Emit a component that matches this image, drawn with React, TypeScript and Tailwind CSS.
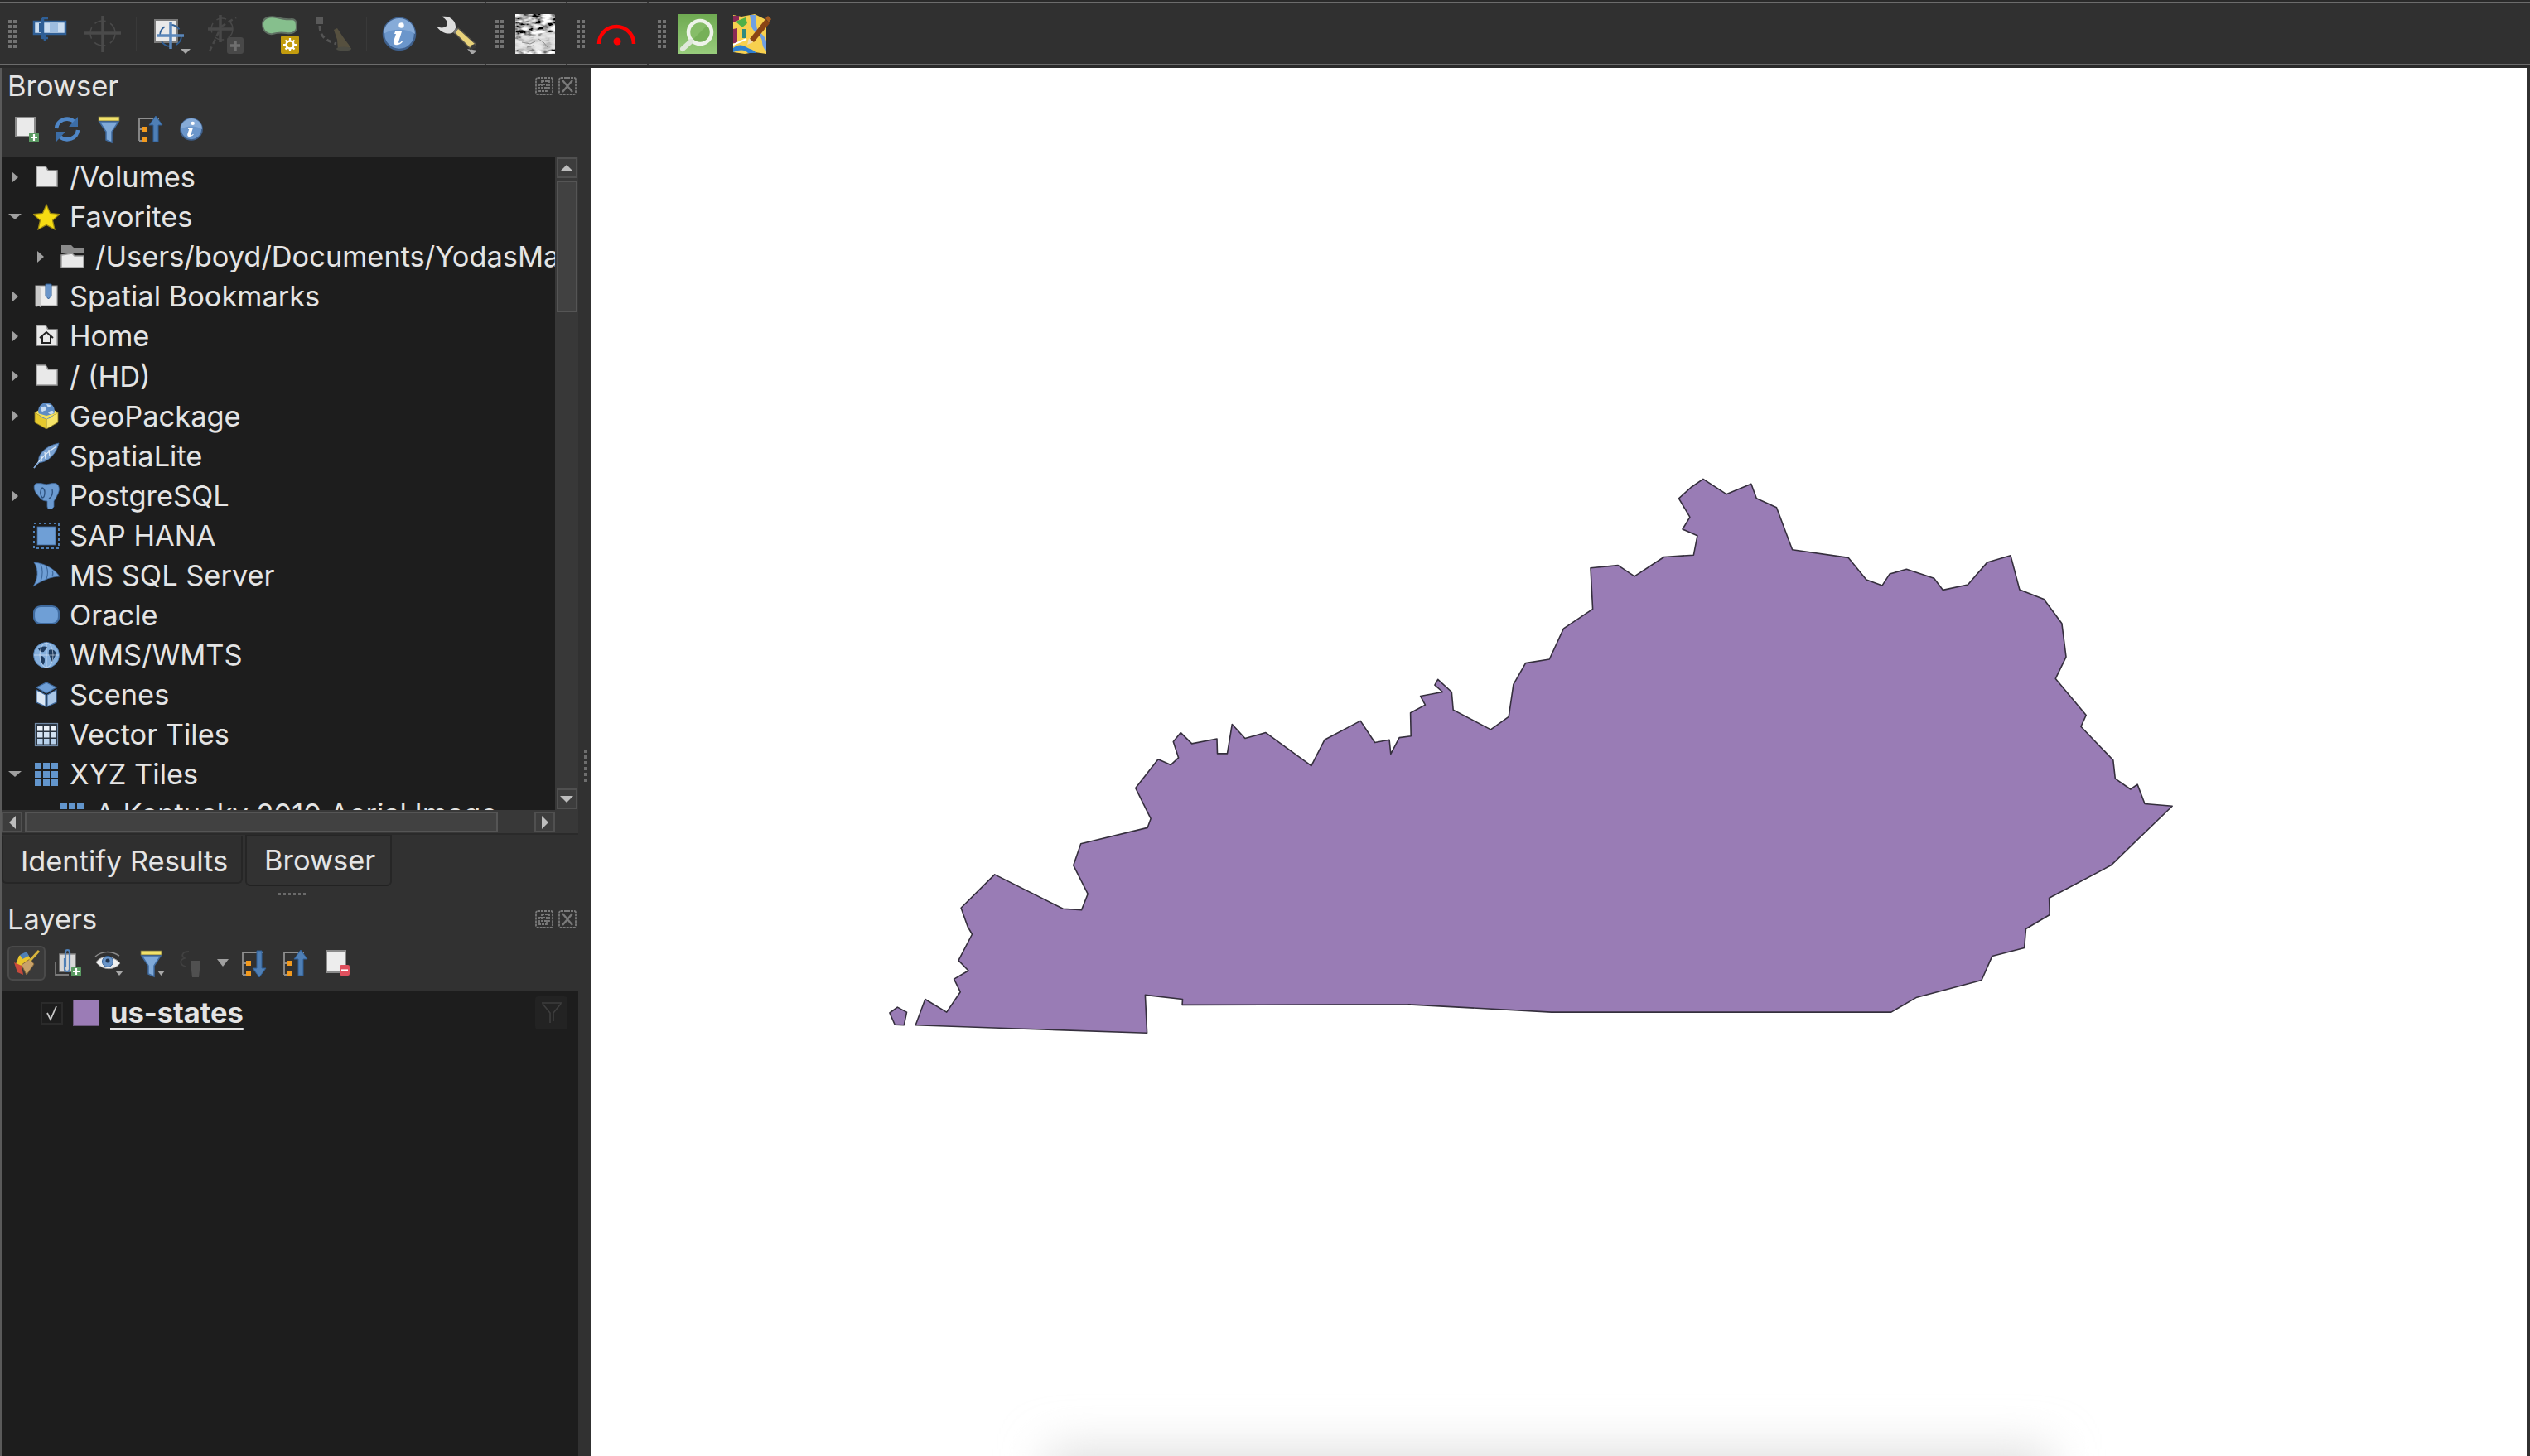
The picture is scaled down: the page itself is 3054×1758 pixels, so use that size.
import React from "react";

const Svg = ({ s = 36, w, h, className = "", children }: { s?: number; w?: number; h?: number; className?: string; children?: React.ReactNode }) => (
  <svg width={w ?? s} height={h ?? s} viewBox={`0 0 ${w ?? s} ${h ?? s}`} className={`shrink-0 ${className}`}>
    {children}
  </svg>
);

/* ---------- main-toolbar icons (48 grid) ---------- */
const Grip = ({ className = "" }: { className?: string }) => (
  <Svg w={10} h={34} className={className}>
    {[0, 6, 12, 18, 24, 30].map((y) => (
      <g key={y} fill="#737373">
        <rect x={0} y={y} width={4} height={4} />
        <rect x={6} y={y} width={4} height={4} />
      </g>
    ))}
  </Svg>
);
const ToolSep = ({ className = "" }: { className?: string }) => <div className={`w-px h-[40px] bg-[#393939] shrink-0 ${className}`} />;

const IcOverview = ({ className = "" }: { className?: string }) => (
  <Svg s={48} className={className}>
    <rect x={5} y={9} width={38} height={15} fill="#c9dcf0" stroke="#2f5f96" strokeWidth={2.5} />
    <rect x={11} y={11} width={2} height={11} fill="#2f5f96" />
    <rect x={24} y={11} width={10} height={11} fill="#9dbde0" />
    <path d="M22 5h-6v24h6M18 24v8" fill="none" stroke="#2f5f96" strokeWidth={2.5} />
    <rect x={14} y={5} width={3} height={25} fill="#2f5f96" />
  </Svg>
);
const IcCrossDisabled = ({ className = "" }: { className?: string }) => (
  <Svg s={48} className={className}>
    <g stroke="#4a4a4a" fill="none">
      <circle cx={24} cy={23} r={15} strokeWidth={1.5} strokeDasharray="14 6" />
      <path d="M24 2v44M2 23h44" strokeWidth={3.5} />
    </g>
  </Svg>
);
const IcSelect = ({ className = "" }: { className?: string }) => (
  <Svg s={48} className={className}>
    <rect x={5} y={7} width={27} height={27} fill="#e9e9e9" stroke="#7b7b7b" strokeWidth={2} />
    <circle cx={24} cy={26} r={13} fill="none" stroke="#2f5f96" strokeWidth={1.8} strokeDasharray="13 7" />
    <path d="M24 10v32M8 26h32" stroke="#5b87ba" strokeWidth={3.5} />
    <path d="M38 43h12l-6 6z" fill="#a8a8a8" transform="translate(-2 -1)" />
  </Svg>
);
const IcAddCross = ({ className = "" }: { className?: string }) => (
  <Svg s={48} className={className}>
    <g stroke="#484848" fill="none">
      <circle cx={20} cy={18} r={13} strokeWidth={1.5} strokeDasharray="12 6" />
      <path d="M18 1v33M3 18h30" strokeWidth={3.5} />
      <path d="M5 45l14-30M19 15l18-11" strokeWidth={2.5} strokeDasharray="6 4" />
    </g>
    <rect x={26} y={28} width={20} height={20} rx={3} fill="#484848" />
    <path d="M36 32v12M30 38h12" stroke="#6f6f6f" strokeWidth={3.5} />
  </Svg>
);
const IcBlob = ({ className = "" }: { className?: string }) => (
  <Svg s={48} className={className}>
    <path d="M3 12C3 4 12 2 20 4c8 2 12 3 18 2 6 0 6 6 6 10 0 6-6 8-12 7-7-1-10-1-17 1C8 25 3 20 3 12z" fill="#86bf8d" stroke="#5f6f62" strokeWidth={2} />
    <rect x={25} y={26} width={22} height={22} rx={2} fill="#c39c0e" />
    <circle cx={36} cy={37} r={4.5} fill="none" stroke="#fff" strokeWidth={2.5} />
    <path d="M36 29v4M36 41v4M28 37h4M40 37h4M30.5 31.5l3 3M38.5 39.5l3 3M41.5 31.5l-3 3M33.5 39.5l-3 3" stroke="#fff" strokeWidth={2.2} />
  </Svg>
);
const IcBrushPath = ({ className = "" }: { className?: string }) => (
  <Svg s={48} className={className}>
    <rect x={3} y={4} width={8} height={8} fill="#5a5a5a" />
    <path d="M7 14c0 14 8 18 20 22" fill="none" stroke="#555" strokeWidth={3} strokeDasharray="6 4" />
    <path d="M24 19l4-2 8 12 6 8 3 5-16 1-1-12z" fill="#56503f" />
    <ellipse cx={36} cy={42} rx={9} ry={2.5} fill="#4c4c44" />
  </Svg>
);
const Info = ({ s = 48, r = 19 }: { s?: number; r?: number }) => {
  const k = r / 19;
  return (
    <Svg s={s}>
      <g transform={`translate(${s / 2} ${s / 2}) scale(${k})`}>
        <circle r={19} fill="#6b96cb" stroke="#3f608c" strokeWidth={2.5} />
        <path d="M-19 0a19 19 0 0 1 38 0c-10-7-28-7-38 0z" fill="#86abd8" />
        <circle cx={2.5} cy={-10.5} r={3.2} fill="#fff" />
        <path d="M-5-3H3L-1 10c0 1.5 2 1 4-1.5l1 1C1 14-8 15-7 9l3-9h-2z" fill="#fff" />
      </g>
    </Svg>
  );
};
const IcWrench = ({ className = "" }: { className?: string }) => (
  <Svg s={48} className={className}>
    <path d="M21 22l5-5 21 19-5 7z" fill="#e8d27a" stroke="#55524a" strokeWidth={1.5} />
    <path d="M6 3C16 1 24 8 23 17l-3 5C14 26 5 22 0 15c7 3 13 1 13-4 0-3-3-6-7-8z" fill="#dcdcdc" />
    <path d="M20 22l3-5 3 1-4 6z" fill="#777" />
    <path d="M37 42l12 2-6 5z" fill="#a8a8a8" />
    <path d="M41 38l5-2 1 5-7 2z" fill="#3a3a3a" />
  </Svg>
);
const IcHillshade = ({ className = "" }: { className?: string }) => (
  <Svg s={48} className={className}>
    <defs>
      <filter id="hs1" x="0" y="0" width="100%" height="100%">
        <feTurbulence type="fractalNoise" baseFrequency="0.09 0.2" numOctaves={3} seed={4} />
        <feColorMatrix values="2.6 0 0 0 -0.8 2.6 0 0 0 -0.8 2.6 0 0 0 -0.8 0 0 0 0 1" />
      </filter>
    </defs>
    <rect width={48} height={48} filter="url(#hs1)" />
    <path d="M0 30l12-3 10 2 14-6 12-2v21l-14 2-10-2-14 3-10-2z" fill="#e4e4e4" opacity={0.82} />
    <path d="M8 34l10 2 6-3M28 30l6 4 5 6M14 40l8-2" fill="none" stroke="#8a8a8a" strokeWidth={1} />
  </Svg>
);
const IcArc = ({ className = "" }: { className?: string }) => (
  <Svg s={48} className={className}>
    <path d="M3 36a21 21 0 0 1 42 0" fill="none" stroke="#fe0000" strokeWidth={4.5} />
    <circle cx={25} cy={33} r={4.5} fill="#fe0000" />
  </Svg>
);
const IcMagnify = ({ className = "" }: { className?: string }) => (
  <Svg s={48} className={className}>
    <defs>
      <linearGradient id="mg" x1="0" y1="0" x2="0" y2="1">
        <stop offset="0" stopColor="#6faa52" />
        <stop offset="1" stopColor="#98cc7c" />
      </linearGradient>
    </defs>
    <rect width={48} height={48} fill="url(#mg)" />
    <circle cx={27} cy={22} r={14} fill="#76b058" />
    <path d="M17 32a14 14 0 0 1 20-20z" fill="#86bd68" />
    <circle cx={27} cy={22} r={14} fill="none" stroke="#eef3ea" strokeWidth={4.5} />
    <path d="M16 33L6 42" stroke="#dfe8da" strokeWidth={6} strokeLinecap="round" />
  </Svg>
);
const IcMap = ({ className = "" }: { className?: string }) => (
  <Svg s={48} className={className}>
    <path d="M0 1l10 2 16-3 8 4 6 3v41l-14-2-12 2-14-2z" fill="#f7d04f" />
    <path d="M0 2h7v5l-7 3zM0 18l5-1v19l-5-1z" fill="#8a2a55" />
    <path d="M3 9l12-5 2 7-6 5z" fill="#4fb048" />
    <path d="M20 1c2 8 0 13 5 19 3 4 9 6 10 13 0 5 2 9 5 11V33c-2-8-8-10-11-15-2-6 0-11-2-17z" fill="#6f9fe3" />
    <path d="M0 41c5-4 10-5 16-1 5 3 8 2 12 7H18c-4-4-9-5-18-1z" fill="#2f7fd0" />
    <rect x={11} y={18} width={5} height={11} fill="#2e8a80" />
    <path d="M0 37l16-7" stroke="#fff" strokeWidth={2} />
    <path d="M20 30L39 6l5 5-19 23z" fill="#8a4414" />
    <path d="M39 5l3-3 4 4-3 4z" fill="#a55a20" />
    <path d="M19 29l5 5-7 3z" fill="#eed9b2" />
  </Svg>
);

/* ---------- small toolbar icons (36 grid) ---------- */
const IcNewPlus = () => (
  <Svg>
    <rect x={6} y={4} width={23} height={23} fill="#eaeaea" stroke="#8a8a8a" strokeWidth={2} />
    <rect x={22} y={22} width={12} height={12} rx={1.5} fill="#5a9a62" />
    <path d="M28 24v8M24 28h8" stroke="#fff" strokeWidth={2.2} />
  </Svg>
);
const IcRefresh = () => (
  <Svg>
    <g fill="none" stroke="#4f86c6" strokeWidth={4.5}>
      <path d="M5 17C6 7 18 2 27 9" />
      <path d="M31 19C30 29 18 34 9 27" />
    </g>
    <path d="M31 3v12H20z" fill="#3c6da6" />
    <path d="M5 33V21h11z" fill="#3c6da6" />
  </Svg>
);
const IcFilter = ({ drop = false }: { drop?: boolean }) => (
  <Svg>
    <rect x={6} y={3} width={25} height={5} fill="#f2e26a" stroke="#6f6a3a" strokeWidth={0.8} />
    <path d="M7 9h23L22 21v13l-7-3V21z" fill="#7fa9d8" stroke="#3f6a9e" strokeWidth={1.5} />
    {drop && <path d="M26 27h9l-4.500 6z" fill="#a8a8a8" />}
  </Svg>
);
const IcTree = ({ down = false }: { down?: boolean }) => (
  <Svg>
    <path d="M5 5h24M5 5v27M5 18h6M5 32h6" stroke="#8f8f8f" strokeWidth={1.8} fill="none" />
    <rect x={9} y={15} width={6} height={6} fill="#f29a1e" />
    <rect x={9} y={28} width={6} height={6} fill="#f29a1e" />
    {down ? (
      <path d="M22 3h6v21h5L25 35 17 24h5z" fill="#4f7fb5" stroke="#2f5f96" strokeWidth={1} />
    ) : (
      <path d="M22 33h6V13h5L25 2 17 13h5z" fill="#4f7fb5" stroke="#2f5f96" strokeWidth={1} />
    )}
  </Svg>
);
const IcPaint = () => (
  <Svg>
    <path d="M9 9l9-4 5 8-11 9-7-3z" fill="#e9c52d" />
    <path d="M3 17l9 4 2 11-7-3z" fill="#c84a3c" />
    <path d="M10 8l8-4 3 5-8 4z" fill="#4f7fb5" />
    <path d="M12 20l10-7 5 6-9 13z" fill="#c9a26a" stroke="#8a6a3a" strokeWidth={1} />
    <path d="M22 15L33 3" stroke="#d8b43c" strokeWidth={3} />
  </Svg>
);
const IcClip = () => (
  <Svg>
    <path d="M3 17v15h16" fill="none" stroke="#7b7b7b" strokeWidth={1.8} />
    <rect x={8} y={7} width={19} height={21} fill="#d8d8d8" stroke="#8a8a8a" strokeWidth={1.5} />
    <path d="M14 12v13c0 4 6 4 6 0V5c0-4-5-4-5 0v17" fill="none" stroke="#4f7fb5" strokeWidth={2.2} />
    <rect x={22} y={22} width={12} height={12} rx={1.5} fill="#5a9a62" />
    <path d="M28 24v8M24 28h8" stroke="#fff" strokeWidth={2.2} />
  </Svg>
);
const IcEye = () => (
  <Svg>
    <path d="M2 17C8 8 22 8 31 18 24 27 10 27 2 17z" fill="#f0f0f0" stroke="#9a9a9a" strokeWidth={1} />
    <path d="M1 10C9 3 20 3 30 9" fill="none" stroke="#8a8a8a" strokeWidth={1.5} />
    <circle cx={16} cy={16} r={6.5} fill="#6a95c9" stroke="#2f5f96" strokeWidth={1} />
    <circle cx={16} cy={15} r={2.500} fill="#20344e" />
    <path d="M25 27h10l-5 6z" fill="#a8a8a8" />
  </Svg>
);
const IcLegendOff = () => (
  <Svg>
    <path d="M14 4C6 4 4 9 9 12c-7 2-6 8 1 10" fill="none" stroke="#414141" strokeWidth={1.8} />
    <path d="M16 15h12v3l-2 17h-8l-2-17z" fill="#505050" />
  </Svg>
);
const IcRemove = () => (
  <Svg>
    <rect x={7} y={3} width={23} height={26} fill="#ededed" stroke="#8a8a8a" strokeWidth={2} />
    <rect x={23} y={20} width={12} height={13} rx={2} fill="#e0505e" />
    <path d="M25 26.500h8" stroke="#fff" strokeWidth={2.2} />
  </Svg>
);
const Float = () => (
  <Svg w={22} h={22}>
    <g fill="none" stroke="#7a7a7a" strokeWidth={1.8} strokeDasharray="3 1">
      <rect x={1} y={1} width={20} height={20} rx={2} />
      <rect x={8} y={5} width={9} height={8} />
      <rect x={5} y={9} width={9} height={8} />
    </g>
  </Svg>
);
const Close = () => (
  <Svg w={22} h={22}>
    <g fill="none" stroke="#7a7a7a" strokeWidth={1.8}>
      <rect x={1} y={1} width={20} height={20} rx={2} strokeDasharray="3 1" />
      <path d="M5 4l12 14M17 4L5 18" strokeWidth={2.4} />
    </g>
  </Svg>
);

/* ---------- tree icons (32 grid) ---------- */
const Folder = () => (
  <Svg s={32}>
    <path d="M4 3h11l3 5h11v19H4z" fill="#e9e9e9" stroke="#9a9a9a" strokeWidth={1.5} />
  </Svg>
);
const FolderOpen = () => (
  <Svg s={32}>
    <path d="M3 2h12l4 4h11v6H3z" fill="#8a8a8a" />
    <path d="M3 14l13-2 3 3h11v14H3z" fill="#e9e9e9" stroke="#9a9a9a" strokeWidth={1.5} />
  </Svg>
);
const Star = () => (
  <Svg s={32}>
    <path d="M16 1l4.500 10.500L32 12.500l-8.500 7.500 2.500 11L16 25.500 6 31l2.500-11L0 12.500l11.500-1z" fill="#f6dc12" stroke="#9d8a12" strokeWidth={1.2} />
  </Svg>
);
const Book = () => (
  <Svg s={32}>
    <path d="M3 3h26v24H8c-3 0-5 2-5 0z" fill="#ececec" stroke="#9a9a9a" strokeWidth={1.2} />
    <path d="M3 3c4 0 6 2 6 4v22c-3-2-6-2-6-2z" fill="#c9c9c9" />
    <path d="M15 1h7v14l-3.500 4-3.500-4z" fill="#6a95c9" stroke="#2f5f96" strokeWidth={1} />
  </Svg>
);
const Home = () => (
  <Svg s={32}>
    <path d="M4 3h11l3 5h11v19H4z" fill="#e9e9e9" stroke="#9a9a9a" strokeWidth={1.5} />
    <path d="M8 18l8-7 8 7M11 16v8h10v-8" fill="none" stroke="#202020" strokeWidth={2} />
  </Svg>
);
const Geo = () => (
  <Svg s={32}>
    <path d="M2 12l14-8 14 8-14 8z" fill="#f4e15c" />
    <path d="M2 12v12l14 8V20z" fill="#e6c92d" stroke="#8a7a20" strokeWidth={0.8} />
    <path d="M30 12v12l-14 8V20z" fill="#f6e468" stroke="#8a7a20" strokeWidth={0.8} />
    <circle cx={16} cy={10} r={10} fill="#5e8cc4" />
    <path d="M9 7c3-3 8-3 7 1-1 3-4 1-5 4zM18 12c3-2 6-3 7 0-2 3-5 3-7 0zM16 2c2 0 5 1 6 2l-4 2z" fill="#c9dcf0" />
    <path d="M2 12l14 8 14-8-14 4z" fill="#f4e15c" />
  </Svg>
);
const Feather = () => (
  <Svg s={32}>
    <path d="M31 1C18 4 10 10 7 18l-1 7 5-1c8-2 17-10 20-23z" fill="#7ba3d3" stroke="#3f6a9e" strokeWidth={0.8} />
    <path d="M28 5C18 11 10 18 1 31M14 12l1 8M19 9l1 8M10 16l0 7" stroke="#dfeaf6" strokeWidth={1.3} fill="none" />
    <path d="M7 24L1 31" stroke="#7ba3d3" strokeWidth={1.5} />
  </Svg>
);
const Pg = () => (
  <Svg s={32}>
    <path d="M3 1c4-1 9 0 13 1 4-1 9-2 12-1 4 2 4 8 2 12l-3 6-2 3v7l-3 3c-3 1-5-1-5-4v-6c-4 0-6-1-8-3L4 13C1 9 0 3 3 1z" fill="#6c9bd1" stroke="#3f6a9e" strokeWidth={0.8} />
    <path d="M11 6c-3 3-3 8 0 12 2 0 3-3 3-7 0-3-1-4-3-5zM23 8c1 4 0 9-4 11" fill="none" stroke="#2f5380" strokeWidth={1.4} />
  </Svg>
);
const Hana = () => (
  <Svg s={32}>
    <rect x={1} y={1} width={30} height={30} fill="none" stroke="#4f7fb5" strokeWidth={2} strokeDasharray="3 3" />
    <rect x={5} y={5} width={22} height={22} fill="#6f9fd6" stroke="#3f6a9e" strokeWidth={0.8} />
  </Svg>
);
const Sail = () => (
  <Svg s={32}>
    <path d="M1 0c12 1 24 7 31 17C22 17 10 22 0 29c6-9 7-20 1-29z" fill="#6f9fd6" stroke="#3f6a9e" strokeWidth={0.8} />
    <path d="M9 2c3 7 3 13 0 21M16 5c2 5 2 10 0 15M23 10c1 2 1 5 0 7" stroke="#3f6a9e" strokeWidth={1.2} fill="none" />
  </Svg>
);
const Oracle = () => (
  <Svg s={32}>
    <rect x={1} y={5} width={30} height={21} rx={8} fill="#6f9fd6" stroke="#3f6a9e" strokeWidth={2.2} />
  </Svg>
);
const Globe = () => (
  <Svg s={32}>
    <circle cx={16} cy={16} r={15.500} fill="#86b0dd" stroke="#4f7fb5" strokeWidth={0.8} />
    <path d="M6 8c4-3 8-3 11-2 0 3-3 3-4 6-3 1-5 0-7-4zM19 10c4-2 8 0 9 5-2 3-3 5-5 9-2-1-2-5-3-7-2-1-1-5-1-7zM9 17c3 0 5 2 5 5 0 3-1 5-2 6-2-3-4-7-3-11z" fill="#1f3c60" />
    <path d="M1 16h30M16 1v30" stroke="#dfeaf6" strokeWidth={0.6} />
    <ellipse cx={16} cy={16} rx={8} ry={15} fill="none" stroke="#dfeaf6" strokeWidth={0.6} />
  </Svg>
);
const Cube = () => (
  <Svg s={32}>
    <path d="M16 1l12 6-12 7L4 7z" fill="#6f9fd6" stroke="#3f6a9e" strokeWidth={1.2} />
    <path d="M4 10l11 6v14L4 25z" fill="#dbe7f4" stroke="#3f6a9e" strokeWidth={1.2} />
    <path d="M28 10l-11 6v14l11-5z" fill="#a9c6e6" stroke="#3f6a9e" strokeWidth={1.2} />
  </Svg>
);
const VGrid = () => (
  <Svg s={32}>
    <rect x={2.500} y={2.500} width={27} height={27} fill="#2a3440" stroke="#6f87a3" strokeWidth={1.2} />
    {[5, 13, 21].map((y) =>
      [5, 13, 21].map((x) => <rect key={`${x}-${y}`} x={x} y={y} width={6.500} height={6.500} fill={y === 21 ? "#b7d0ea" : y === 13 ? "#d3e2f2" : "#edf3fa"} />),
    )}
  </Svg>
);
const XGrid = () => (
  <Svg s={32}>
    {[2, 12, 22].map((y) =>
      [2, 12, 22].map((x) => <rect key={`${x}-${y}`} x={x} y={y} width={8} height={8} fill="#6295cc" />),
    )}
  </Svg>
);

/* ---------- tree ---------- */
const Right = () => (
  <svg width={16} height={14} viewBox="0 0 16 14" className="shrink-0">
    <path d="M4 0l8 7-8 7z" fill="#9f9f9f" />
  </svg>
);
const Down = () => (
  <svg width={16} height={14} viewBox="0 0 16 14" className="shrink-0">
    <path d="M0 3h16L8 10z" fill="#9f9f9f" />
  </svg>
);

type Row = { label: string; icon: React.ReactNode; arrow?: "r" | "d"; indent?: boolean };
const rows: Row[] = [
  { label: "/Volumes", icon: <Folder />, arrow: "r" },
  { label: "Favorites", icon: <Star />, arrow: "d" },
  { label: "/Users/boyd/Documents/YodasMaps/", icon: <FolderOpen />, arrow: "r", indent: true },
  { label: "Spatial Bookmarks", icon: <Book />, arrow: "r" },
  { label: "Home", icon: <Home />, arrow: "r" },
  { label: "/ (HD)", icon: <Folder />, arrow: "r" },
  { label: "GeoPackage", icon: <Geo />, arrow: "r" },
  { label: "SpatiaLite", icon: <Feather /> },
  { label: "PostgreSQL", icon: <Pg />, arrow: "r" },
  { label: "SAP HANA", icon: <Hana /> },
  { label: "MS SQL Server", icon: <Sail /> },
  { label: "Oracle", icon: <Oracle /> },
  { label: "WMS/WMTS", icon: <Globe /> },
  { label: "Scenes", icon: <Cube /> },
  { label: "Vector Tiles", icon: <VGrid /> },
  { label: "XYZ Tiles", icon: <XGrid />, arrow: "d" },
  { label: "A Kentucky 2010 Aerial Image", icon: <XGrid />, indent: true },
];

const TreeRow = ({ r }: { r: Row }) => (
  <div className={`flex items-center h-[48.07px] shrink-0 ${r.indent ? "pl-[39px]" : "pl-[8px]"}`}>
    <div className="w-[16px] shrink-0">{r.arrow === "r" ? <Right /> : r.arrow === "d" ? <Down /> : null}</div>
    <div className="ml-[14px] w-[32px] shrink-0">{r.icon}</div>
    <span className="ml-[12px] whitespace-nowrap">{r.label}</span>
  </div>
);

/* ---------- scrollbars ---------- */
const ScrollBtn = ({ dir }: { dir: "u" | "d" | "l" | "r" }) => (
  <div className="w-[25px] h-[25px] shrink-0 flex items-center justify-center bg-[#3d3d3d] border-2 border-[#505050]">
    <svg width={16} height={16} viewBox="0 0 16 16">
      <path
        d={dir === "u" ? "M0 12L8 4l8 8z" : dir === "d" ? "M0 4h16l-8 8z" : dir === "l" ? "M12 0v16L4 8z" : "M4 0v16l8-8z"}
        fill="#bdbdbd"
      />
    </svg>
  </div>
);

/* ---------- map ---------- */
const z7 = (x: number, y: number) => `${(1040 + x / 2.24).toFixed(1)},${(560 + y / 2.178).toFixed(1)}`;
const z8 = (x: number, y: number) => `${(1700 + x / 1.568).toFixed(1)},${(560 + y / 2.178).toFixed(1)}`;

const west = [
  [146, 1476], [172, 1408], [230, 1442], [267, 1389], [250, 1355], [289, 1333], [262, 1306], [299, 1237], [287, 1217], [269, 1168],
  [360, 1080], [545, 1170], [595, 1173], [612, 1131], [573, 1056], [593, 999], [773, 957], [782, 933], [741, 853], [802, 777],
  [836, 792], [857, 773], [843, 731], [863, 707], [893, 736], [961, 723], [962, 762], [989, 762], [1002, 685], [1037, 722],
  [1093, 707], [1216, 794], [1252, 726], [1349, 676], [1388, 733], [1427, 726], [1431, 763], [1454, 720],
];
const east = [
  [5, 716], [4, 655], [32, 634], [23, 611], [65, 600], [50, 582], [56, 567], [82, 600], [85, 647], [156, 699], [190, 665], [199, 580],
  [222, 524], [267, 514], [294, 433], [349, 382], [345, 274], [397, 267], [428, 296], [484, 245], [540, 240], [547, 189], [519, 172],
  [533, 140], [512, 91], [535, 62], [558, 40], [602, 80], [649, 53], [659, 91], [697, 115], [727, 226], [833, 247], [867, 305],
  [897, 320], [911, 290], [943, 277], [995, 301], [1012, 332], [1059, 318], [1096, 259], [1140, 241], [1157, 331], [1203, 356],
  [1237, 420], [1245, 508], [1225, 565], [1283, 661], [1273, 691], [1334, 779], [1338, 828], [1367, 856], [1380, 843], [1394, 894],
  [1446, 900], [1330, 1056], [1213, 1142], [1214, 1186], [1169, 1223], [1166, 1273], [1105, 1295], [1085, 1358], [961, 1404],
  [914, 1442], [271, 1442], [0, 1422],
];
const south = [[1484, 1422], [867, 1423], [868, 1408], [767, 1397], [772, 1497]];
const pentagon = [[76, 1444], [97, 1429], [122, 1442], [115, 1476], [90, 1475]];

const state = [
  ...west.map(([x, y]) => z7(x, y)),
  ...east.map(([x, y]) => z8(x, y)),
  ...south.map(([x, y]) => z7(x, y)),
].join(" ");
const island = pentagon.map(([x, y]) => z7(x, y)).join(" ");

const ToolLine = () => (
  <div className="flex h-[2px] shrink-0 bg-[#6c6c6c]">
    <div className="w-[587px] border-r-2 border-[#3a3a3a]" />
    <div className="w-[98px] border-r-2 border-[#3a3a3a]" />
    <div className="w-[98px] border-r-2 border-[#3a3a3a]" />
  </div>
);

export default function App() {
  return (
    <div className="w-[3054px] h-[1758px] overflow-hidden flex flex-col bg-[#313131] text-[#e4e4e4] text-[34.4px] font-[Inter,sans-serif]">
      {/* Main toolbar */}
      <div className="h-[82px] shrink-0 flex flex-col bg-[#303030]">
        <div className="h-[2px] shrink-0 bg-[#2a2a2a]" />
        <ToolLine />
        <div className="flex-1 flex items-center pl-[10px]">
          <Grip />
          <IcOverview className="ml-[16px]" />
          <IcCrossDisabled className="ml-[16px]" />
          <ToolSep className="ml-[16px]" />
          <IcSelect className="ml-[17px]" />
          <IcAddCross className="ml-[18px]" />
          <IcBlob className="ml-[18px]" />
          <IcBrushPath className="ml-[17px]" />
          <ToolSep className="ml-[15px]" />
          <div className="ml-[15px]">
            <Info />
          </div>
          <IcWrench className="ml-[21px]" />
          <Grip className="ml-[23px]" />
          <IcHillshade className="ml-[14px]" />
          <Grip className="ml-[26px]" />
          <IcArc className="ml-[14px]" />
          <Grip className="ml-[26px]" />
          <IcMagnify className="ml-[14px]" />
          <IcMap className="ml-[19px]" />
        </div>
        <ToolLine />
        <div className="h-[3px] shrink-0 bg-[#2a2a2a]" />
      </div>

      <div className="flex-1 min-h-0 flex">
        {/* Left docks */}
        <div className="w-[714px] shrink-0 flex border-l-2 border-[#5a5a5a]">
          <div className="w-[696px] shrink-0 flex flex-col">
            {/* Browser panel */}
            <div className="h-[48px] shrink-0 flex items-center pl-[7px] pr-[2px] pb-[5px]">
              <span>Browser</span>
              <div className="ml-auto flex gap-[6px]">
                <Float />
                <Close />
              </div>
            </div>
            <div className="h-[60px] shrink-0 flex items-center gap-[14px] pl-[11px] pb-[8px]">
              <IcNewPlus />
              <IcRefresh />
              <IcFilter />
              <IcTree />
              <Info s={36} r={13} />
            </div>
            <div className="h-[816px] shrink-0 flex">
              <div className="w-[668px] shrink-0 flex flex-col">
                <div className="flex-1 min-h-0 overflow-hidden bg-[#1d1d1d] flex flex-col">
                  {rows.map((r) => (
                    <TreeRow key={r.label} r={r} />
                  ))}
                </div>
                <div className="h-[28px] shrink-0 flex items-center bg-[#383838] pt-[1px]">
                  <ScrollBtn dir="l" />
                  <div className="ml-[3px] w-[571px] h-[25px] bg-[#414141] border-2 border-[#555555]" />
                  <div className="ml-auto">
                    <ScrollBtn dir="r" />
                  </div>
                </div>
              </div>
              <div className="w-[28px] shrink-0 flex flex-col items-center bg-[#383838]">
                <ScrollBtn dir="u" />
                <div className="mt-[3px] w-[25px] h-[159px] bg-[#414141] border-2 border-[#555555]" />
                <div className="mt-auto mb-[29px]">
                  <ScrollBtn dir="d" />
                </div>
              </div>
            </div>
            <div className="h-[2px] shrink-0 bg-[#2a2a2a]" />
            {/* Tabs */}
            <div className="h-[62px] shrink-0 flex items-start">
              <div className="w-[291px] h-[57px] mt-[2px] flex items-center pl-[21px] pt-[4px] bg-[#2f2f2f] border-2 border-t-0 border-[#262626] rounded-b-md">
                Identify Results
              </div>
              <div className="ml-[3px] w-[177px] h-[62px] flex items-center pl-[21px] bg-[#323232] border-2 border-[#262626] border-b-[#222222] rounded-b-md">
                Browser
              </div>
            </div>
            <div className="h-[16px] shrink-0 pl-[334px] pt-[8px]">
              <div className="flex gap-[3px]">
                {[0, 1, 2, 3, 4, 5].map((i) => (
                  <div key={i} className="w-[3px] h-[3px] bg-[#6a6a6a]" />
                ))}
              </div>
            </div>
            {/* Layers panel */}
            <div className="h-[48px] shrink-0 flex items-center pl-[7px] pr-[2px]">
              <span>Layers</span>
              <div className="ml-auto flex gap-[6px]">
                <Float />
                <Close />
              </div>
            </div>
            <div className="h-[62px] shrink-0 flex items-center pl-[7px] pb-[4px]">
              <div className="w-[46px] h-[42px] flex items-center justify-center bg-[#3a3a3a] border-2 border-[#4a4a4a] rounded-md">
                <IcPaint />
              </div>
              <div className="ml-[9px]">
                <IcClip />
              </div>
              <div className="ml-[14px]">
                <IcEye />
              </div>
              <div className="ml-[14px]">
                <IcFilter drop />
              </div>
              <div className="ml-[14px]">
                <IcLegendOff />
              </div>
              <svg width={14} height={10} viewBox="0 0 14 10" className="ml-[12px] shrink-0">
                <path d="M0 0h14L7 9z" fill="#a0a0a0" />
              </svg>
              <div className="ml-[12px]">
                <IcTree down />
              </div>
              <div className="ml-[14px]">
                <IcTree />
              </div>
              <div className="ml-[13px]">
                <IcRemove />
              </div>
            </div>
            <div className="flex-1 min-h-0 bg-[#1d1d1d] border-t border-[#2a2a2a]">
              <div className="h-[52px] flex items-center pl-[47px] pr-[13px]">
                <div className="w-[27px] h-[27px] flex items-center justify-center border-2 border-[#2b2b2b] shrink-0">
                  <svg width={18} height={20} viewBox="0 0 18 20">
                    <path d="M3 10l4 8L14 2" fill="none" stroke="#c8c8c8" strokeWidth={1.8} />
                  </svg>
                </div>
                <div className="ml-[12px] w-[32px] h-[32px] bg-[#9b7cb6] border border-[#6e5a80] shrink-0" />
                <span className="ml-[13px] font-bold underline decoration-[3px] underline-offset-[6px]">us-states</span>
                <div className="ml-auto w-[39px] h-[40px] flex items-center justify-center bg-[#232323] rounded-sm">
                  <svg width={26} height={28} viewBox="0 0 26 28">
                    <path d="M1 2h24M2 3l9 11v12M24 3l-9 11v10" fill="none" stroke="#3e3e3e" strokeWidth={1.6} />
                  </svg>
                </div>
              </div>
            </div>
          </div>
          {/* Vertical splitter */}
          <div className="flex-1 flex flex-col items-center pt-[823px] gap-[3px] pl-[2px]">
            {[0, 1, 2, 3, 4, 5].map((i) => (
              <div key={i} className="w-[4px] h-[4px] bg-[#6e6e6e]" />
            ))}
          </div>
        </div>

        {/* Map canvas */}
        <div className="flex-1 min-w-0 mr-[4px] bg-white">
          <svg viewBox="714 82 2336 1676" className="w-full h-full">
            <defs>
              <filter id="glow" x="-10%" y="-100%" width="120%" height="300%">
                <feGaussianBlur stdDeviation="28" />
              </filter>
            </defs>
            <rect x={1265} y={1750} width={1210} height={120} fill="#dedede" filter="url(#glow)" />
            <polygon points={state} fill="#997cb5" stroke="#352f3d" strokeWidth={1.6} strokeLinejoin="round" />
            <polygon points={island} fill="#997cb5" stroke="#352f3d" strokeWidth={1.6} strokeLinejoin="round" />
          </svg>
        </div>
      </div>
    </div>
  );
}
